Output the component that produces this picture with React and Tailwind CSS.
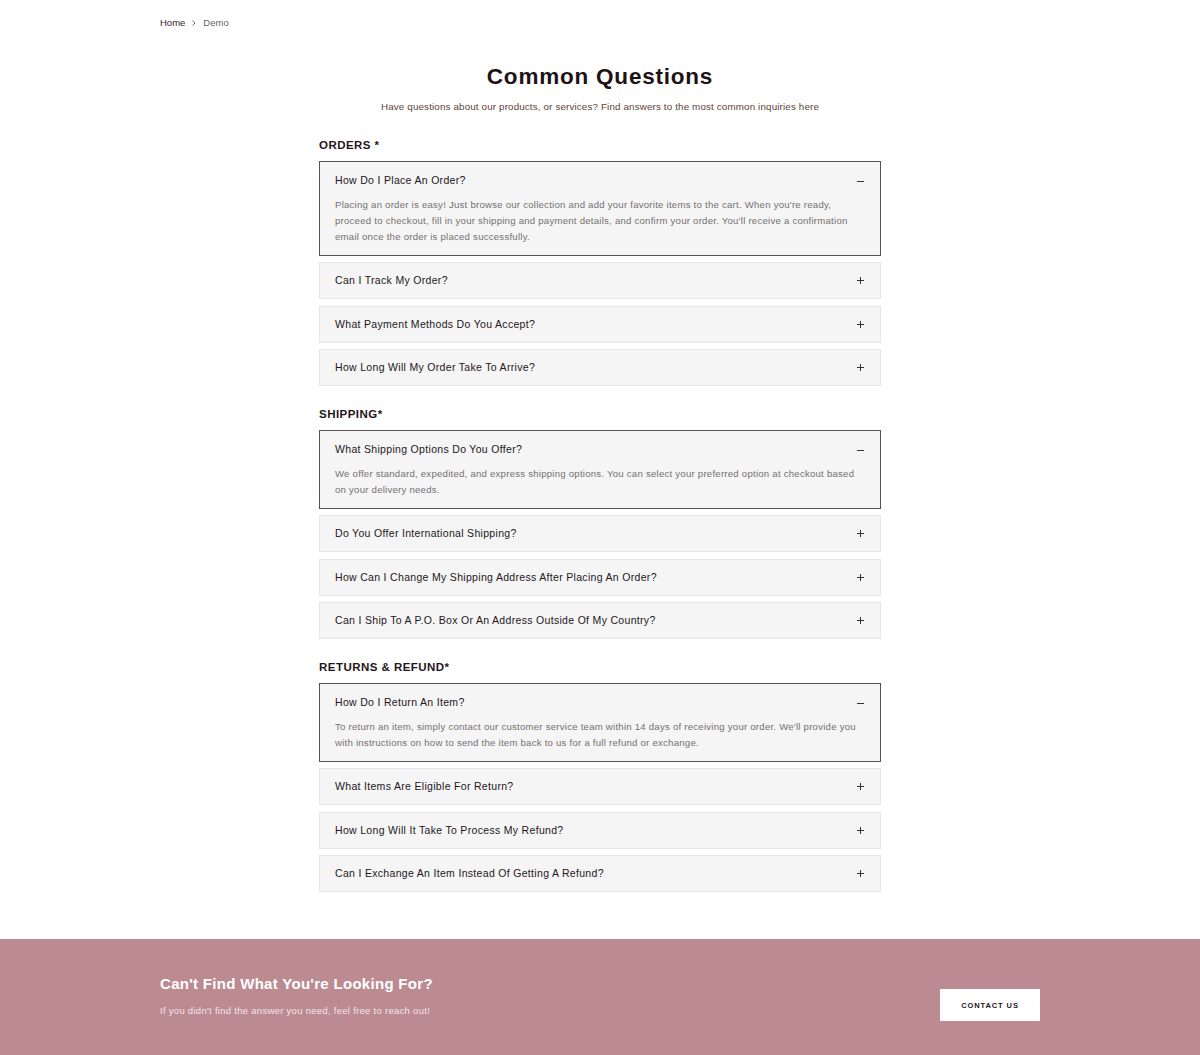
import React, { useState } from 'react';

const sections = [
  {
    title: 'ORDERS *',
    items: [
      {
        q: 'How Do I Place An Order?',
        a: "Placing an order is easy! Just browse our collection and add your favorite items to the cart. When you're ready, proceed to checkout, fill in your shipping and payment details, and confirm your order. You'll receive a confirmation email once the order is placed successfully.",
      },
      { q: 'Can I Track My Order?', a: '' },
      { q: 'What Payment Methods Do You Accept?', a: '' },
      { q: 'How Long Will My Order Take To Arrive?', a: '' },
    ],
  },
  {
    title: 'SHIPPING*',
    items: [
      {
        q: 'What Shipping Options Do You Offer?',
        a: 'We offer standard, expedited, and express shipping options. You can select your preferred option at checkout based on your delivery needs.',
      },
      { q: 'Do You Offer International Shipping?', a: '' },
      { q: 'How Can I Change My Shipping Address After Placing An Order?', a: '' },
      { q: 'Can I Ship To A P.O. Box Or An Address Outside Of My Country?', a: '' },
    ],
  },
  {
    title: 'RETURNS & REFUND*',
    items: [
      {
        q: 'How Do I Return An Item?',
        a: "To return an item, simply contact our customer service team within 14 days of receiving your order. We'll provide you with instructions on how to send the item back to us for a full refund or exchange.",
      },
      { q: 'What Items Are Eligible For Return?', a: '' },
      { q: 'How Long Will It Take To Process My Refund?', a: '' },
      { q: 'Can I Exchange An Item Instead Of Getting A Refund?', a: '' },
    ],
  },
];

const FaqItem = ({ item, open, onToggle }) => (
  <div
    className={`bg-[#f5f5f5] border ${open ? 'border-[#5b5055]' : 'border-[#e6e6e6]'}`}
  >
    <button
      onClick={onToggle}
      className={`w-full flex items-center justify-between px-[15px] text-left ${open ? 'pt-[11px] pb-[8px]' : 'h-[35px]'}`}
    >
      <span className="text-[10.5px] font-medium text-[#24161b] tracking-[0.03em]">{item.q}</span>
      <span className="w-[8px] h-[8px] relative">
        <span className="absolute left-0 top-[3.5px] w-[7px] h-[1px] bg-[#3a2e32]" />
        {!open && <span className="absolute left-[3px] top-[0.5px] w-[1px] h-[7px] bg-[#3a2e32]" />}
      </span>
    </button>
    {open && (
      <p className="px-[15px] pb-[10px] pr-[24px] text-[9.6px] leading-[16px] text-[#747072] tracking-[0.025em]">{item.a}</p>
    )}
  </div>
);

const FaqSection = ({ section }) => {
  const [openIdx, setOpenIdx] = useState(0);
  return (
    <div className="flex flex-col">
      <h3 className="text-[11.5px] font-bold text-[#24161b] tracking-[0.04em] mb-[7px]">{section.title}</h3>
      <div className="flex flex-col gap-[6.5px]">
        {section.items.map((item, i) => (
          <FaqItem
            key={item.q}
            item={item}
            open={openIdx === i}
            onToggle={() => setOpenIdx(openIdx === i ? -1 : i)}
          />
        ))}
      </div>
    </div>
  );
};

export default function App() {
  return (
    <div className="min-h-[1055px] bg-white flex flex-col font-['Liberation_Sans',Arial,sans-serif]">
      {/* breadcrumb */}
      <nav className="px-[160px] pt-[16px] flex items-center gap-[5px] text-[9.5px]">
        <span className="text-[#3a2226]">Home</span>
        <svg width="8" height="8" viewBox="0 0 8 8" fill="none">
          <path d="M2.5 1.5 L5 4 L2.5 6.5" stroke="#6b6266" strokeWidth="0.9" />
        </svg>
        <span className="text-[#6b6266]">Demo</span>
      </nav>

      <main className="w-[562px] mx-auto flex flex-col">
        <h1 className="mt-[32px] text-center text-[22.5px] font-bold text-[#1d1216] tracking-[0.035em] leading-[30px]">
          Common Questions
        </h1>
        <p className="mt-[8px] text-center text-[9.8px] text-[#5e4438] tracking-[0.015em]">
          Have questions about our products, or services? Find answers to the most common inquiries here
        </p>

        <div className="mt-[22px] flex flex-col gap-[19.5px]">
          {sections.map((s) => (
            <FaqSection key={s.title} section={s} />
          ))}
        </div>
      </main>

      <footer className="mt-[47px] bg-[#bb8b91] h-[116px] px-[160px] flex items-start justify-between pt-[36px]">
        <div className="flex flex-col">
          <h2 className="text-[15px] font-bold text-white tracking-[0.02em] leading-[18px]">Can't Find What You're Looking For?</h2>
          <p className="mt-[11px] text-[9.5px] text-[#f4e4e6] tracking-[0.03em]">If you didn't find the answer you need, feel free to reach out!</p>
        </div>
        <button className="mt-[14px] w-[100px] h-[32px] bg-white text-[7.5px] font-bold tracking-[0.12em] text-[#24161b]">
          CONTACT US
        </button>
      </footer>
    </div>
  );
}
